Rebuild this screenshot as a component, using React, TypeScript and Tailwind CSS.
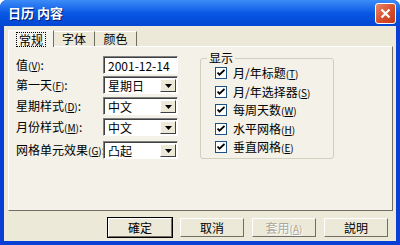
import React from "react";

const font = { fontFamily: '"Noto Sans CJK SC", "Liberation Sans", sans-serif' };

function Key({ k }: { k: string }) {
    return (
        <span className="text-[10px]">
            (<span className="underline">{k}</span>)
        </span>
    );
}

function Arrow() {
    return (
        <div className="w-[16px] h-full bg-[#ECE9D8] border-t border-l border-t-white border-l-white border-b border-r border-b-[#404040] border-r-[#404040] flex items-center justify-center">
            <svg width="7" height="4" viewBox="0 0 7 4">
                <path d="M0 0h7L3.5 4z" fill="#000" />
            </svg>
        </div>
    );
}

function Field({ children, select }: { children: React.ReactNode; select?: boolean }) {
    return (
        <div className="w-[75px] h-[18px] bg-white border-t border-l border-t-[#808080] border-l-[#808080] border-b border-r border-b-white border-r-white flex items-stretch">
            <div className="flex-1 flex items-center border-t border-l border-t-[#404040] border-l-[#404040] pl-[3px] text-[12px] text-black">
                <span className="flex-1">{children}</span>
                {select && (
                    <div className="h-full py-[1px] pr-[1px]">
                        <Arrow />
                    </div>
                )}
            </div>
        </div>
    );
}

function Check({ label, k }: { label: string; k: string }) {
    return (
        <div className="flex items-center h-[18.5px] gap-[6px]">
            <div className="w-[12px] h-[12px] bg-white border border-[#1C5180] flex items-center justify-center">
                <svg width="8" height="8" viewBox="0 0 8 8">
                    <path d="M0.5 3.5l2 2.2L7.5 1" stroke="#000" strokeWidth="1.8" fill="none" />
                </svg>
            </div>
            <span className="text-[12px] text-black">
                {label}
                <Key k={k} />
            </span>
        </div>
    );
}

function Btn({ children, def, disabled }: { children: React.ReactNode; def?: boolean; disabled?: boolean }) {
    return (
        <div className={`w-[66px] h-[21px] ${def ? "border border-black" : "border border-transparent"}`}>
            <div className="w-full h-full bg-[#ECE9D8] border-t border-l border-t-white border-l-white border-b border-r border-b-[#716F64] border-r-[#716F64] flex items-center justify-center">
                <span className={`text-[12px] ${disabled ? "text-[#ACA899] [text-shadow:1px_1px_0_#fff]" : "text-black"}`}>{children}</span>
            </div>
        </div>
    );
}

export default function App() {
    return (
        <div style={font} className="w-[400px] h-[245px] bg-[#0A3FD6] rounded-t-[7px] flex flex-col overflow-hidden">
            {/* Title bar */}
            <div className="h-[26px] shrink-0 bg-gradient-to-b from-[#3C8CF8] via-[#0958E4] to-[#0346D2] flex items-center pl-[8px] pr-[4px]">
                <span className="flex-1 text-white text-[13px] font-bold [text-shadow:1px_1px_0_#0A1E6E]">日历 内容</span>
                <div className="w-[21px] h-[21px] rounded-[3px] border border-white bg-gradient-to-br from-[#E9876A] via-[#D9512E] to-[#C23A18] flex items-center justify-center">
                    <svg width="11" height="11" viewBox="0 0 11 11">
                        <path d="M1.5 1.5l8 8M9.5 1.5l-8 8" stroke="#fff" strokeWidth="2.2" />
                    </svg>
                </div>
            </div>

            {/* Body */}
            <div className="flex-1 mx-[4px] mb-[4px] bg-[#ECE9D8] flex flex-col px-[4px] pt-[3px]">
                {/* Tabs */}
                <div className="flex items-end h-[17px]">
                    <div className="h-[17px] w-[46px] bg-[#F4F3EE] border-t border-l border-t-white border-l-white border-r border-r-[#716F64] flex items-center justify-center relative z-10 -mb-[1px]">
                        <span className="text-[12px] text-black outline outline-1 outline-dotted outline-black px-[2px] leading-[13px]">常规</span>
                    </div>
                    <div className="h-[15px] w-[41px] border-t border-t-white border-r border-r-[#716F64] flex items-center justify-center">
                        <span className="text-[12px] text-black">字体</span>
                    </div>
                    <div className="h-[15px] w-[42px] border-t border-t-white border-r border-r-[#716F64] flex items-center justify-center">
                        <span className="text-[12px] text-black">颜色</span>
                    </div>
                </div>

                {/* Panel */}
                <div className="h-[165px] w-[385px] bg-[#F3F1E8] border-t border-l border-t-white border-l-white border-b border-r border-b-[#716F64] border-r-[#716F64] flex pl-[7px] pt-[9px]">
                    <div className="w-[87px] flex flex-col text-[12px] text-black">
                        <div className="h-[18px] flex items-center">值<Key k="V" />:</div>
                        <div className="h-[18px] flex items-center mt-[2px]">第一天<Key k="F" />:</div>
                        <div className="h-[18px] flex items-center mt-[3px]">星期样式<Key k="D" />:</div>
                        <div className="h-[18px] flex items-center mt-[3px]">月份样式<Key k="M" />:</div>
                        <div className="h-[18px] flex items-center mt-[5px] whitespace-nowrap">网格单元效果<Key k="G" />:</div>
                    </div>
                    <div className="flex flex-col">
                        <div><Field>2001-12-14</Field></div>
                        <div className="mt-[2px]"><Field select>星期日</Field></div>
                        <div className="mt-[3px]"><Field select>中文</Field></div>
                        <div className="mt-[3px]"><Field select>中文</Field></div>
                        <div className="mt-[5px]"><Field select>凸起</Field></div>
                    </div>

                    {/* Group box */}
                    <div className="ml-[22px] mt-[2px] w-[134px] h-[101px] border border-[#D0D0BF] rounded-[3px] relative pl-[14px] pt-[5px]">
                        <span className="absolute -top-[9px] left-[6px] px-[2px] bg-[#F3F1E8] text-[12px] text-black leading-[16px]">显示</span>
                        <Check label="月/年标题" k="T" />
                        <Check label="月/年选择器" k="S" />
                        <Check label="每周天数" k="W" />
                        <Check label="水平网格" k="H" />
                        <Check label="垂直网格" k="E" />
                    </div>
                </div>

                {/* Buttons */}
                <div className="flex justify-end gap-[6px] mt-[6px] pr-[3px]">
                    <Btn def>確定</Btn>
                    <Btn>取消</Btn>
                    <Btn disabled>
                        套用<span className="text-[10px]">(<span className="underline">A</span>)</span>
                    </Btn>
                    <Btn>説明</Btn>
                </div>
            </div>
        </div>
    );
}
